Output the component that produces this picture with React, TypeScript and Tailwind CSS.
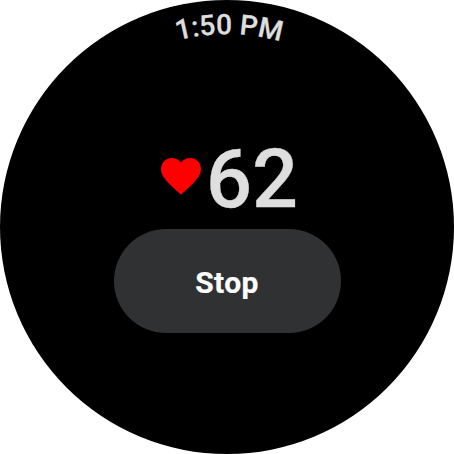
export default function App() {
  return (
    <div className="flex h-[454px] w-[454px] overflow-hidden bg-white font-['Roboto',sans-serif]">
      <main className="relative flex h-full w-full flex-col items-center overflow-hidden rounded-full bg-black pt-[131px]">
        <svg className="absolute inset-0 h-full w-full" viewBox="0 0 454 454">
          <defs>
            <path id="bezel" d="M 34 227 A 193 193 0 0 1 420 227" />
          </defs>
          <text className="fill-[#dedede] stroke-[#dedede] text-[28px] font-medium" strokeWidth="0.3" textAnchor="middle">
            <textPath href="#bezel" startOffset="50.35%">1:50 PM</textPath>
          </text>
        </svg>
        <div className="flex h-[98px] items-center pl-px">
          <svg className="-mt-[9px] h-12 w-12" viewBox="0 0 24 24" fill="#ff0000">
            <path d="M12 21.35l-1.45-1.32C5.4 15.36 2 12.28 2 8.5 2 5.42 4.42 3 7.5 3c1.74 0 3.41.81 4.5 2.09C13.09 3.81 14.76 3 16.5 3 19.58 3 22 5.42 22 8.5c0 3.78-3.4 6.86-8.55 11.54L12 21.35z" />
          </svg>
          <span className="mb-0.5 ml-px text-[81px] leading-none font-medium text-[#dedede] [-webkit-text-stroke:0.3px_#dedede]">62</span>
        </div>
        <button className="flex h-[104px] w-[227px] items-center justify-center rounded-full bg-[#303133] pt-0.5 text-[30px] font-bold tracking-[0.4px] text-white [-webkit-text-stroke:0.2px_white]">Stop</button>
      </main>
    </div>
  );
}
